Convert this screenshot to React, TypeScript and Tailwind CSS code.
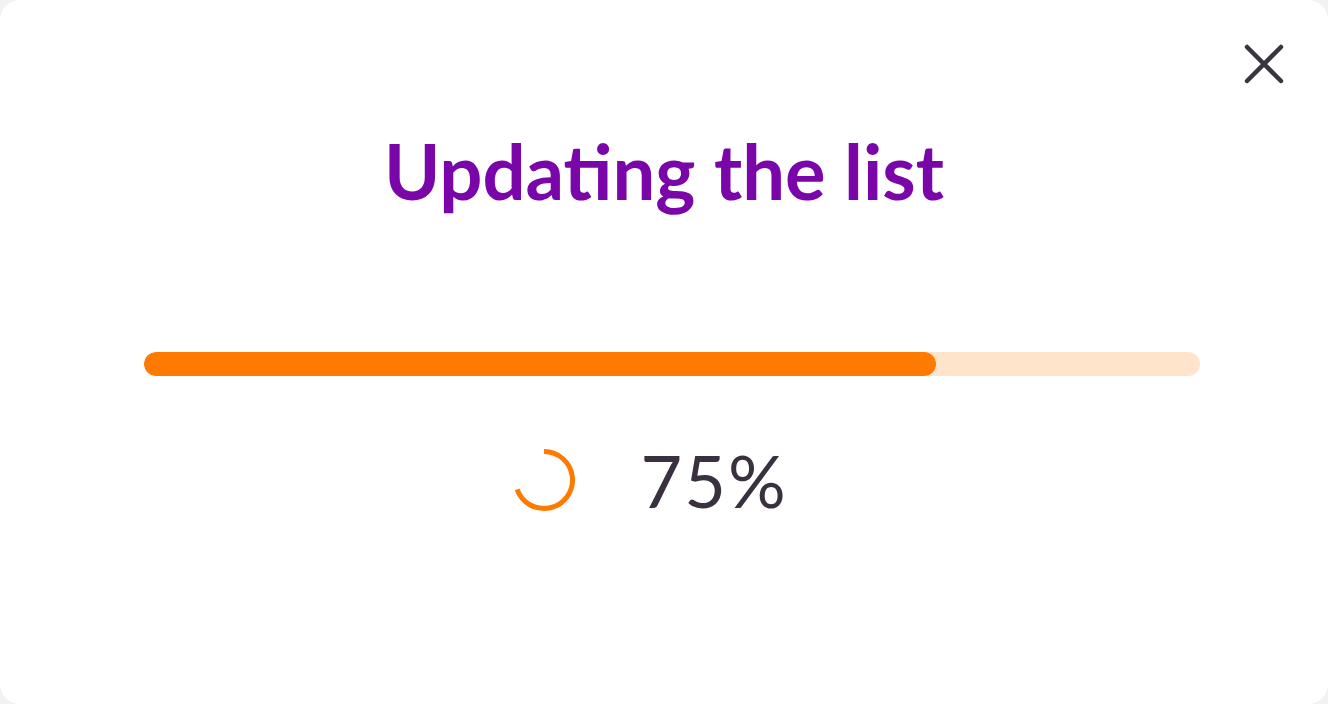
export default function App() {
  const progress = 75;

  return (
    <div className="h-[704px] w-full bg-[#f2f2f2]" style={{ fontFamily: "Lato, 'Open Sans', sans-serif" }}>
      <div className="relative flex h-full flex-col items-center rounded-[20px] bg-white">
        <button className="absolute right-[44px] top-[44px] flex h-10 w-10 items-center justify-center text-[#3a3342]" aria-label="Close">
          <svg width="40" height="40" viewBox="0 0 40 40" fill="none" stroke="currentColor" strokeWidth="4.5" strokeLinecap="round">
            <path d="M3 3L37 37M37 3L3 37" />
          </svg>
        </button>

        <h1 className="mt-[133px] text-[76px] font-bold leading-none text-[#7a05a8]">Updating the list</h1>

        <div className="mt-[143px] w-full pl-[144px] pr-[128px]">
          <div className="h-6 w-full overflow-hidden rounded-full bg-[#ffe4cc]">
            <div className="h-full rounded-full bg-[#ff7a00]" style={{ width: `${progress}%` }} />
          </div>
        </div>

        <div className="mr-[28px] mt-[68px] flex items-center gap-[64px]">
          <svg width="64" height="64" viewBox="0 0 64 64" fill="none">
            <path
              d="M32 3.5A28.5 28.5 0 1 1 5.1 41.4"
              stroke="#ff7a00"
              strokeWidth="5"
            />
          </svg>
          <span className="text-[72px] font-normal leading-none tracking-[2px] text-[#39313f]">{progress}%</span>
        </div>
      </div>
    </div>
  );
}
